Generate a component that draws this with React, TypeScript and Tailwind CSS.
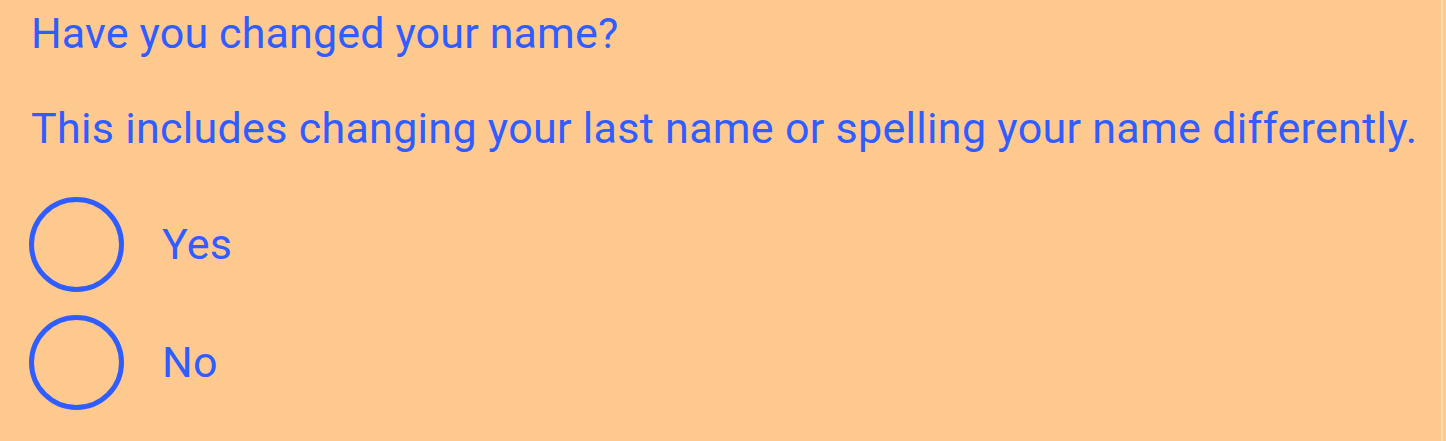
import React from "react";

const font = { fontFamily: "Roboto, 'Noto Sans', sans-serif" };

function Radio({ label }: { label: string }) {
  return (
    <label className="flex items-center gap-[38px]">
      <span className="block w-[95px] h-[95px] shrink-0 rounded-full border-[5px] border-[#2f5dff]" />
      <span className="text-[43px] leading-[59px] tracking-[0.2px]">{label}</span>
    </label>
  );
}

export default function App() {
  return (
    <div className="flex w-[1446px] h-[441px] bg-[#fec98f] overflow-hidden">
      <div
        className="flex flex-col w-[1443px] h-full pl-[29px] pt-[4px] text-[#2f5dff] border-r-2 border-[#ffdcb0]"
        style={font}
      >
        <h1 className="ml-[2px] text-[43px] leading-[59px] tracking-[0.15px] font-normal">Have you changed your name?</h1>
        <p className="ml-[2px] mt-[36px] text-[43px] leading-[59px] tracking-[0.3px] whitespace-nowrap">
          This includes changing your last name or spelling your name differently.
        </p>
        <div className="mt-[39px] flex flex-col gap-[23px]">
          <Radio label="Yes" />
          <Radio label="No" />
        </div>
      </div>
    </div>
  );
}
